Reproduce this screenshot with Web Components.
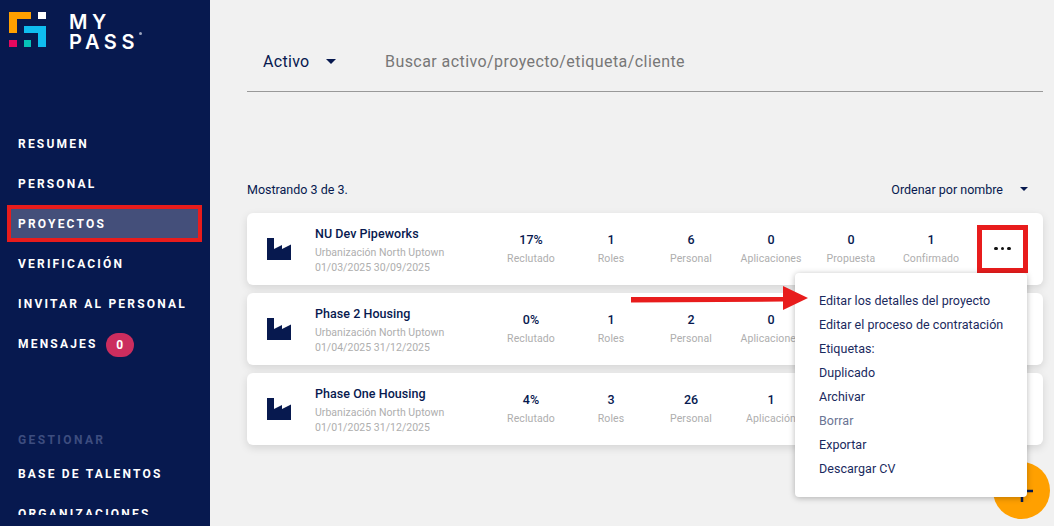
<!DOCTYPE html>
<html lang="es">
  <head>
    <meta charset="UTF-8" />
    <title>My Pass</title>
    <style>
      html, body { margin: 0; height: 100%; overflow: hidden; }
      body { font-family: Roboto, "Liberation Sans", sans-serif; color: #07194f; background: #f1f1f1; }
    </style>
  </head>
  <body>
    <app-shell>
      <app-sidebar slot="side">
        <brand-logo slot="logo"></brand-logo>
        <nav-item>RESUMEN</nav-item>
        <nav-item>PERSONAL</nav-item>
        <nav-item active>PROYECTOS</nav-item>
        <nav-item>VERIFICACIÓN</nav-item>
        <nav-item>INVITAR AL PERSONAL</nav-item>
        <nav-item badge="0">MENSAJES</nav-item>
        <nav-heading>GESTIONAR</nav-heading>
        <nav-item>BASE DE TALENTOS</nav-item>
        <nav-item>ORGANIZACIONES</nav-item>
      </app-sidebar>

      <search-bar></search-bar>
      <list-header></list-header>

      <project-card name="NU Dev Pipeworks" place="Urbanización North Uptown" dates="01/03/2025 30/09/2025" flagged>
        <stat-cell value="17%">Reclutado</stat-cell>
        <stat-cell value="1">Roles</stat-cell>
        <stat-cell value="6">Personal</stat-cell>
        <stat-cell value="0">Aplicaciones</stat-cell>
        <stat-cell value="0">Propuesta</stat-cell>
        <stat-cell value="1">Confirmado</stat-cell>
      </project-card>
      <project-card name="Phase 2 Housing" place="Urbanización North Uptown" dates="01/04/2025 31/12/2025">
        <stat-cell value="0%">Reclutado</stat-cell>
        <stat-cell value="1">Roles</stat-cell>
        <stat-cell value="2">Personal</stat-cell>
        <stat-cell value="0">Aplicaciones</stat-cell>
      </project-card>
      <project-card name="Phase One Housing" place="Urbanización North Uptown" dates="01/01/2025 31/12/2025">
        <stat-cell value="4%">Reclutado</stat-cell>
        <stat-cell value="3">Roles</stat-cell>
        <stat-cell value="26">Personal</stat-cell>
        <stat-cell value="1">Aplicación</stat-cell>
      </project-card>

      <add-fab slot="over"></add-fab>
      <action-menu slot="over">
        <menu-line>Editar los detalles del proyecto</menu-line>
        <menu-line>Editar el proceso de contratación</menu-line>
        <menu-line>Etiquetas:</menu-line>
        <menu-line>Duplicado</menu-line>
        <menu-line>Archivar</menu-line>
        <menu-line muted>Borrar</menu-line>
        <menu-line>Exportar</menu-line>
        <menu-line>Descargar CV</menu-line>
      </action-menu>
      <red-arrow slot="over"></red-arrow>
    </app-shell>

    <script>
      // pequeño ayudante: cada clase solo declara su html
      function define(tag, html, setup) {
        customElements.define(
          tag,
          class extends HTMLElement {
            constructor() {
              super();
              this.attachShadow({ mode: "open" });
            }
            connectedCallback() {
              const get = (n) => this.getAttribute(n) || "";
              this.shadowRoot.innerHTML = typeof html === "function" ? html(get, this) : html;
              if (setup) setup(this);
            }
          }
        );
      }

      define("app-shell", `
        <style>
          :host { display: flex; width: 1054px; height: 526px; overflow: hidden; position: relative; }
          .side { flex: 0 0 210px; height: 526px; }
          main { flex: 1; min-width: 0; padding: 0 11px 0 37px; position: relative; }
        </style>
        <div class="side"><slot name="side"></slot></div>
        <main><slot></slot></main>
        <slot name="over"></slot>
      `);

      define("app-sidebar", `
        <style>
          :host { display: flex; flex-direction: column; width: 210px; height: 526px; background: #07194f; }
          .logo { height: 125px; flex: none; }
          nav { flex: 1; min-height: 0; overflow: hidden; margin-bottom: 11px; }
        </style>
        <div class="logo"><slot name="logo"></slot></div>
        <nav><slot></slot></nav>
      `);

      define("brand-logo", `
        <style>
          :host { display: flex; gap: 23px; padding: 12px 0 0 9px; color: #fff; }
          svg { display: block; flex: none; }
          .name { font: 600 20px/20px Inter, sans-serif; letter-spacing: 4.6px; position: relative; }
          .reg { position: absolute; left: 70px; top: 20px; width: 3px; height: 3px; border-radius: 50%; background: #9aa3bd; }
        </style>
        <svg width="37" height="35" viewBox="0 0 37 35">
          <path fill="#ffa000" d="M0 0H22V7H8V21H0Z" />
          <rect fill="#fff" x="29" y="0" width="8" height="7" />
          <path fill="#0fbdf0" d="M15 14H37V35H29V21H15Z" />
          <rect fill="#e5085f" x="0" y="28" width="8" height="7" />
          <rect fill="#06c2b8" x="15" y="28" width="7" height="7" />
        </svg>
        <div class="name">MY<br />PASS<span class="reg"></span></div>
      `);

      define("nav-item", (get) => `
        <style>
          :host { display: block; box-sizing: border-box; height: 40px; padding-top: 4px; }
          .link {
            display: flex; align-items: center; gap: 8px; box-sizing: border-box;
            height: 29px; margin: 0 12px 0 11px; padding: 2px 0 0 7px;
            font: 700 12px/27px Roboto, sans-serif; letter-spacing: 2.2px; color: #fff; white-space: nowrap;
          }
          :host([active]) .link { background: #444f7a; outline: 4px solid #e81c1c; }
          .badge {
            width: 28px; height: 24px; border-radius: 12px; background: #cb2d5e;
            font: 700 12px/24px Roboto, sans-serif; letter-spacing: 0; text-align: center;
          }
        </style>
        <div class="link"><slot></slot>${get("badge") ? `<span class="badge">${get("badge")}</span>` : ""}</div>
      `);

      define("nav-heading", `
        <style>
          :host {
            display: block; height: 35px; margin-top: 55px; box-sizing: border-box; padding: 0 0 0 18px;
            font: 700 12px/40px Roboto, sans-serif; letter-spacing: 2.4px; color: #3d4d7f;
          }
        </style>
        <slot></slot>
      `);

      define("search-bar", `
        <style>
          :host {
            display: flex; align-items: center; box-sizing: border-box; height: 92px; padding: 31px 0 0 16px;
            border-bottom: 1px solid #999; font-size: 16px;
          }
          .filter { width: 122px; display: flex; align-items: center; color: #07194f; letter-spacing: .3px; }
          .caret { width: 0; height: 0; margin-left: 16px; border: 5px solid transparent; border-top-color: #07194f; border-bottom: 0; }
          .q { color: #777; letter-spacing: 0.43px; }
        </style>
        <div class="filter">Activo<span class="caret"></span></div>
        <div class="q">Buscar activo/proyecto/etiqueta/cliente</div>
      `);

      define("list-header", `
        <style>
          :host {
            display: flex; justify-content: space-between; align-items: center; height: 24px; margin: 85px 0 12px;
            font-size: 12.5px; color: #07194f;
          }
          .sort { display: flex; align-items: center; padding-right: 15px; }
          .caret { width: 0; height: 0; margin-left: 17px; border: 4px solid transparent; border-top-color: #07194f; border-bottom: 0; }
        </style>
        <div>Mostrando 3 de 3.</div>
        <div class="sort">Ordenar por nombre<span class="caret"></span></div>
      `);

      define("project-card", (get) => `
        <style>
          :host {
            display: flex; align-items: center; height: 72px; margin-bottom: 8px; background: #fff;
            border-radius: 6px; box-shadow: 0 3px 8px rgba(0, 0, 0, .12);
          }
          svg { flex: none; margin: 0 24px 0 20px; display: block; }
          .info { width: 176px; flex: none; padding-top: 3px; }
          .name { font-size: 12.5px; font-weight: 500; line-height: 16px; letter-spacing: .05px; color: #07194f; }
          .sub { font-size: 10.5px; line-height: 15px; color: #aeaeae; letter-spacing: .03px; margin-top: 3px; }
          .sub + .sub { margin-top: 0; }
          .stats { display: grid; grid-template-columns: repeat(6, 80px); flex: none; }
          .dots {
            box-sizing: border-box; width: 51px; height: 48px; margin: 0 0 1px 6px; display: flex;
            align-items: center; justify-content: center; gap: 3px;
          }
          :host([flagged]) .dots { border: 5px solid #e81c1c; }
          .dots i { width: 3.5px; height: 3.5px; border-radius: 50%; background: #111; }
        </style>
        <svg width="24" height="22" viewBox="0 0 24 22"><path fill="#07194f" d="M0 0H7V11L15 7V11L24 6.5V22H0Z" /></svg>
        <div class="info">
          <div class="name">${get("name")}</div>
          <div class="sub">${get("place")}</div>
          <div class="sub">${get("dates")}</div>
        </div>
        <div class="stats"><slot></slot></div>
        <div class="dots"><i></i><i></i><i></i></div>
      `);

      define("stat-cell", (get) => `
        <style>
          :host { display: block; text-align: center; }
          .v { font-size: 12.5px; font-weight: 500; line-height: 16px; color: #07194f; }
          .l { font-size: 10.5px; line-height: 15px; color: #aeaeae; margin-top: 3px; letter-spacing: .1px; }
        </style>
        <div class="v">${get("value")}</div>
        <div class="l"><slot></slot></div>
      `);

      define("action-menu", `
        <style>
          :host {
            position: absolute; left: 795px; top: 273px; box-sizing: border-box; width: 232px; height: 224px;
            padding: 16px 0 0 24px; background: #fff; border-radius: 4px; box-shadow: 0 1px 6px rgba(0, 0, 0, .28);
          }
        </style>
        <slot></slot>
      `);

      define("menu-line", `
        <style>
          :host { display: block; height: 24px; font-size: 12.5px; line-height: 24px; letter-spacing: .04px; color: #1a2a5e; white-space: nowrap; }
          :host([muted]) { color: #6b7594; }
        </style>
        <slot></slot>
      `);

      define("add-fab", `
        <style>
          :host { position: absolute; left: 993px; top: 462px; width: 57px; height: 57px; border-radius: 50%; background: #ffa000; }
          svg { display: block; }
        </style>
        <svg width="57" height="57" viewBox="0 0 57 57"><path stroke="#07194f" stroke-width="2.5" d="M17 29H40M29 17V40" /></svg>
      `);

      define("red-arrow", `
        <style>
          :host { position: absolute; left: 631px; top: 286px; width: 177px; height: 24px; }
          svg { display: block; }
        </style>
        <svg width="177" height="24" viewBox="0 0 177 24"><path fill="#e81c1c" d="M0 11H152V0L177 12L152 24V15.5L0 16.5Z" /></svg>
      `);
    </script>
  </body>
</html>
